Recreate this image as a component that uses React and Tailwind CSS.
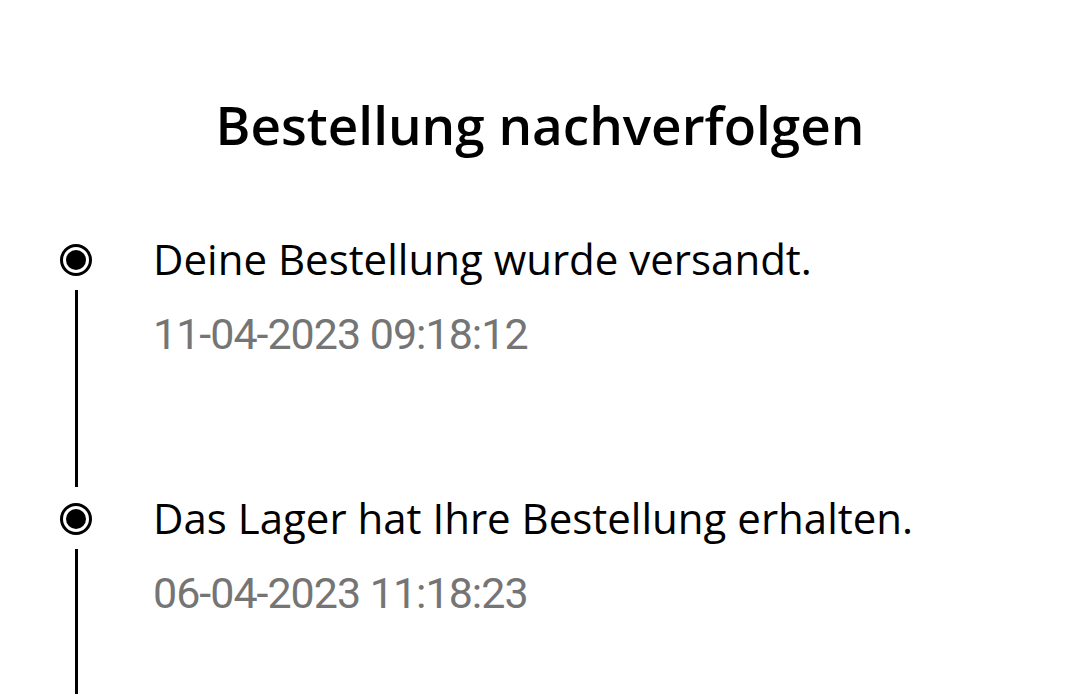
import React from "react";

const events = [
  { text: "Deine Bestellung wurde versandt.", time: "11-04-2023 09:18:12" },
  { text: "Das Lager hat Ihre Bestellung erhalten.", time: "06-04-2023 11:18:23" },
];

const Dot = () => (
  <div className="w-[32px] h-[32px] rounded-full border-[3px] border-black flex items-center justify-center shrink-0">
    <div className="w-[20px] h-[20px] rounded-full bg-black" />
  </div>
);

const App = () => {
  return (
    <div className="w-[1080px] h-[694px] bg-white overflow-hidden text-black font-['Open_Sans',sans-serif]">
      <h1 className="pt-[95px] text-center text-[53px] leading-[60px] font-semibold">
        Bestellung nachverfolgen
      </h1>

      <div className="mt-[80px] pl-[60px]">
        {events.map((e, i) => (
          <div key={i} className="flex h-[259px]">
            <div className="flex flex-col items-center w-[32px]">
              <div className="mt-[9px]">
                <Dot />
              </div>
              <div className="w-[3px] flex-1 bg-black mt-[14px] mb-[7px]" />
            </div>
            <div className="ml-[61px]">
              <p className="text-[42px] leading-[48px]">{e.text}</p>
              <p className="mt-[27px] text-[43px] leading-[48px] tracking-[-1px] text-[#757575] font-['Roboto',sans-serif]">
                {e.time}
              </p>
            </div>
          </div>
        ))}
      </div>
    </div>
  );
};

export default App;
